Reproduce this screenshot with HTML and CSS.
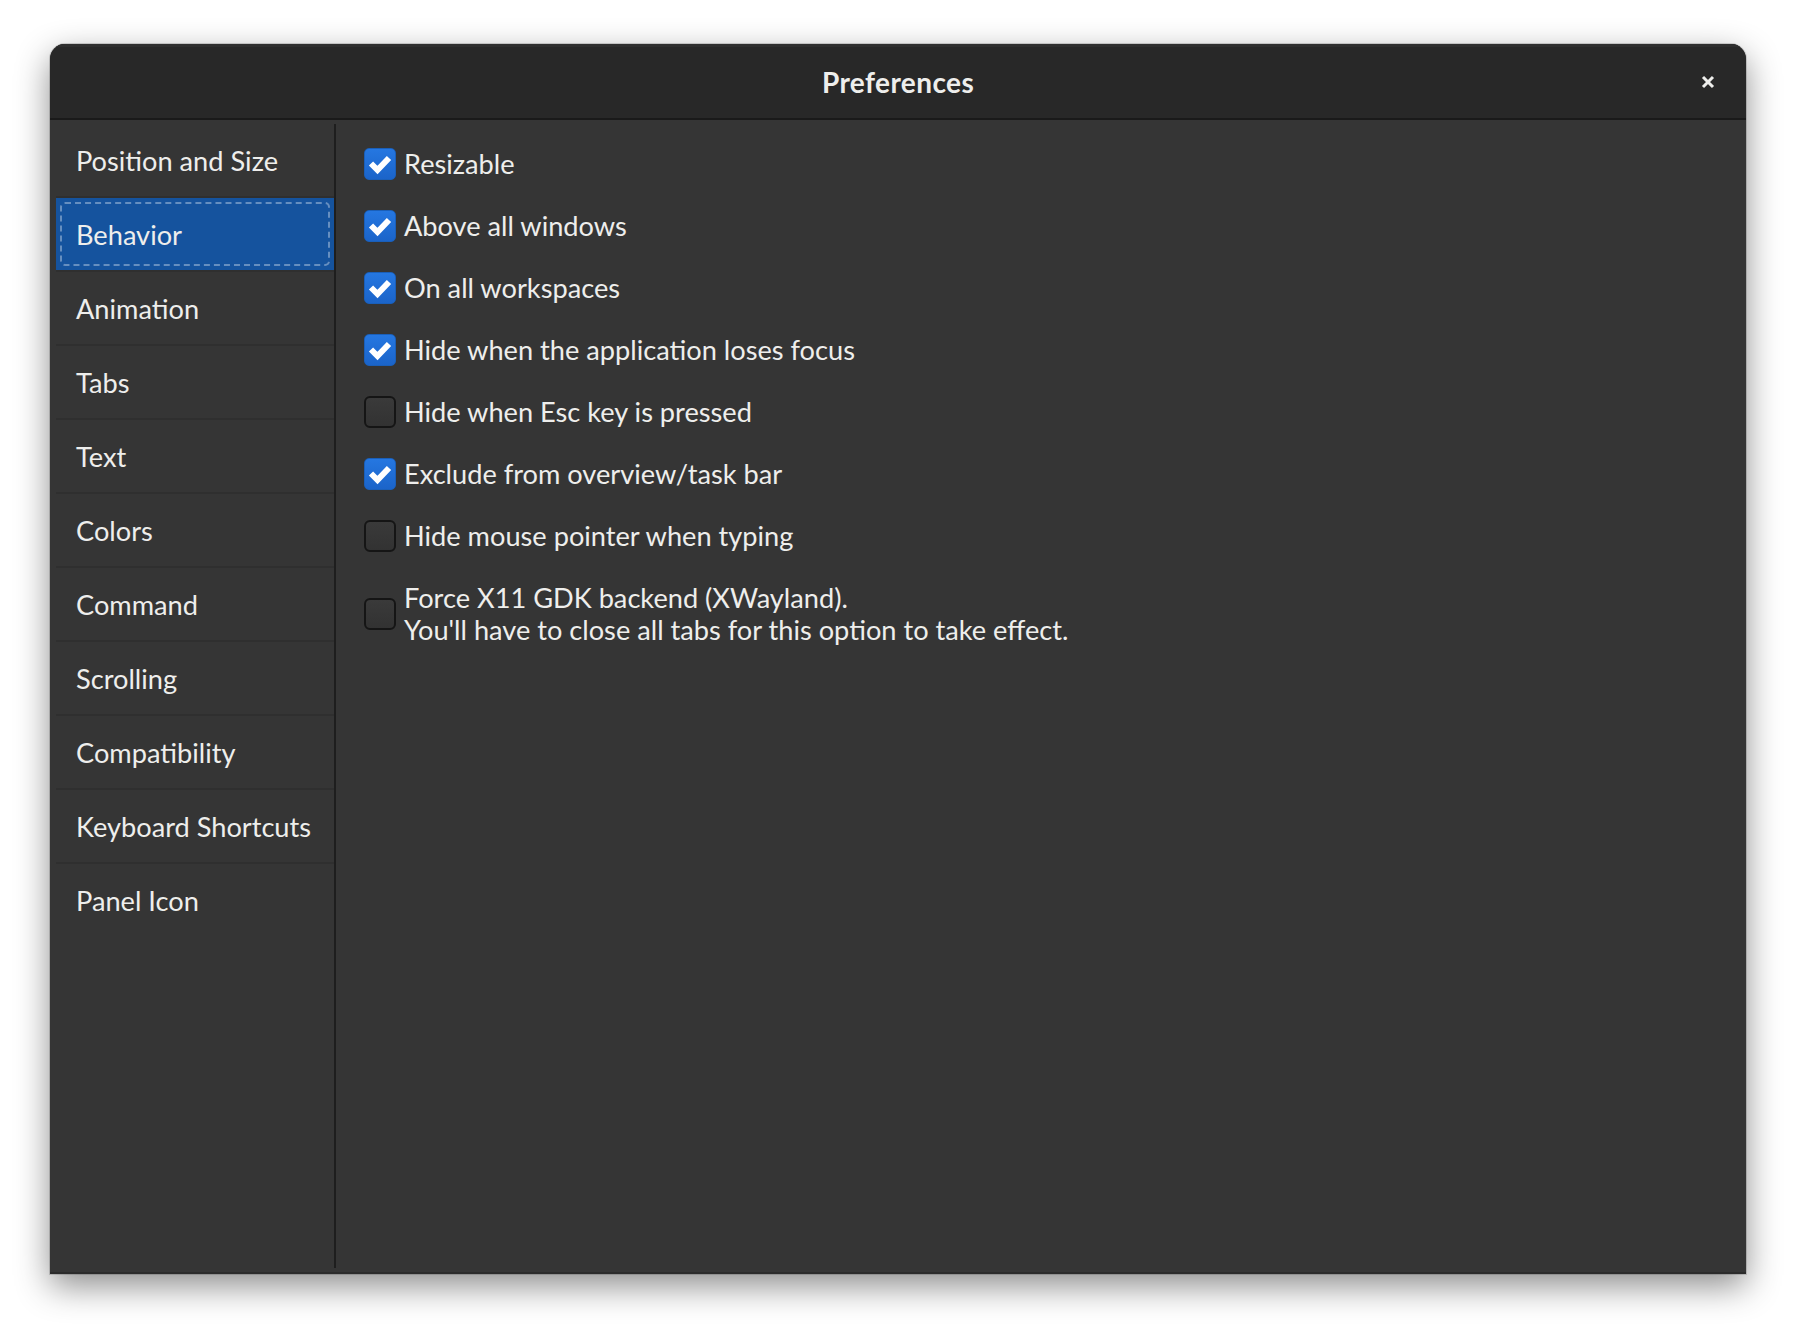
FILE: index.html
```html
<!DOCTYPE html>
<html>
<head>
<meta charset="utf-8">
<link rel="stylesheet" href="styles.css">
</head>
<body>
<div class="window">
  <header class="titlebar">
    <div class="title">Preferences</div>
    <button class="close" aria-label="Close">
      <svg width="14" height="14" viewBox="0 0 14 14"><path d="M2 2 L12 12 M12 2 L2 12" stroke="#eeeeec" stroke-width="3" stroke-linecap="butt"/></svg>
    </button>
  </header>
  <div class="body">
    <nav class="sidebar">
      <div class="nav-item">Position and Size</div>
      <div class="nav-item selected">Behavior</div>
      <div class="nav-item">Animation</div>
      <div class="nav-item">Tabs</div>
      <div class="nav-item">Text</div>
      <div class="nav-item">Colors</div>
      <div class="nav-item">Command</div>
      <div class="nav-item">Scrolling</div>
      <div class="nav-item">Compatibility</div>
      <div class="nav-item">Keyboard Shortcuts</div>
      <div class="nav-item">Panel Icon</div>
    </nav>
    <main class="content">
      <label class="option"><span class="check on"></span><span class="label">Resizable</span></label>
      <label class="option"><span class="check on"></span><span class="label">Above all windows</span></label>
      <label class="option"><span class="check on"></span><span class="label">On all workspaces</span></label>
      <label class="option"><span class="check on"></span><span class="label">Hide when the application loses focus</span></label>
      <label class="option"><span class="check"></span><span class="label">Hide when Esc key is pressed</span></label>
      <label class="option"><span class="check on"></span><span class="label">Exclude from overview/task bar</span></label>
      <label class="option"><span class="check"></span><span class="label">Hide mouse pointer when typing</span></label>
      <label class="option"><span class="check"></span><span class="label"><span class="line">Force X11 GDK backend (XWayland).</span><span class="line">You'll have to close all tabs for this option to take effect.</span></span></label>
    </main>
  </div>
</div>
</body>
</html>
```
FILE: styles.css
```css
html, body { margin: 0; padding: 0; }
body {
  width: 1796px;
  height: 1330px;
  background: #ffffff;
  font-family: "Lato", "Noto Sans", sans-serif;
  color: #eeeeec;
  overflow: hidden;
}
.window {
  margin: 44px 0 0 50px;
  width: 1696px;
  height: 1230px;
  background: #353535;
  border-radius: 15px 15px 0 0;
  box-shadow: 0 12px 34px rgba(0,0,0,0.45), 0 0 0 1px rgba(0,0,0,0.15);
  display: flex;
  flex-direction: column;
  overflow: hidden;
  border-bottom: 2px solid #2b2b2b;
  box-sizing: border-box;
}
.titlebar {
  height: 76px;
  flex: none;
  box-sizing: border-box;
  background: #282828;
  border-bottom: 2px solid #1a1a1a;
  box-shadow: inset 0 3px 0 #2f2f2f;
  display: flex;
  align-items: center;
  justify-content: center;
  position: relative;
}
.title {
  font-weight: bold;
  font-size: 28px;
  letter-spacing: 0.4px;
  padding-top: 2px;
}
.close {
  position: absolute;
  right: 31px;
  top: 31px;
  width: 14px;
  height: 14px;
  padding: 0;
  border: 0;
  background: transparent;
  display: flex;
}
.body {
  flex: 1;
  display: flex;
  padding: 4px 0 4px 6px;
  min-height: 0;
}
.sidebar {
  width: 278px;
  flex: none;
  border-right: 2px solid #1e1e1e;
  display: flex;
  flex-direction: column;
}
.nav-item {
  height: 72px;
  flex: none;
  border-bottom: 2px solid #2f2f2f;
  display: flex;
  align-items: center;
  padding-left: 20px;
  font-size: 27.2px;
  position: relative;
}
.nav-item:last-child { border-bottom: 0; }
.nav-item.selected {
  background: #15539e;
}
.nav-item.selected::after {
  content: "";
  position: absolute;
  left: 4px; right: 4px; top: 4px; bottom: 4px;
  border: 2px dashed rgba(255,255,255,0.35);
  border-radius: 5px;
}
.content {
  flex: 1;
  padding: 24px 0 0 28px;
  display: flex;
  flex-direction: column;
  gap: 30px;
}
.option {
  display: flex;
  align-items: center;
  gap: 8px;
  font-size: 27.2px;
  line-height: 32px;
}
.label .line { display: block; }
.check {
  width: 32px;
  height: 32px;
  box-sizing: border-box;
  border-radius: 6px;
  border: 2px solid #151515;
  background: linear-gradient(#3a3a3a, #323232);
  flex: none;
}
.check.on {
  border: 1px solid #1a5fb9;
  border-radius: 5px;
  background-image: url("data:image/svg+xml;utf8,<svg xmlns='http://www.w3.org/2000/svg' width='32' height='32'><path d='M7 15.5 L13.5 22 L25 10' fill='none' stroke='white' stroke-width='6'/></svg>"), linear-gradient(#2577e1, #1b64c9);
  background-position: -1px -1px, 0 0;
  background-repeat: no-repeat;
}
```
